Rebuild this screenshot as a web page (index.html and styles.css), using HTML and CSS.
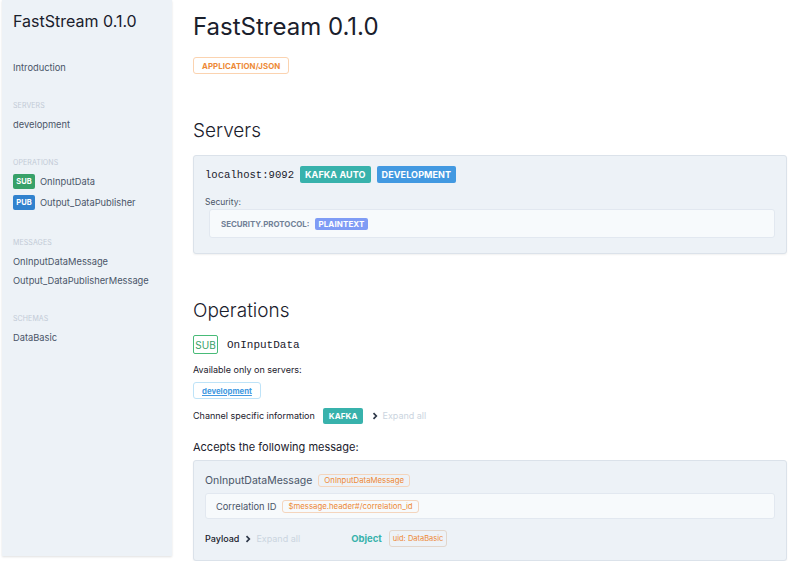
FILE: index.html
```html
<!DOCTYPE html>
<html>
<head>
<meta charset="utf-8">
<link rel="stylesheet" href="styles.css">
</head>
<body>
<div class="layout">
  <aside class="sidebar">
    <div class="side-title">FastStream 0.1.0</div>
    <div class="side-item intro">Introduction</div>
    <div class="side-label">SERVERS</div>
    <div class="side-item">development</div>
    <div class="side-label">OPERATIONS</div>
    <div class="side-op"><span class="op-badge sub">SUB</span><span>OnInputData</span></div>
    <div class="side-op"><span class="op-badge pub">PUB</span><span>Output_DataPublisher</span></div>
    <div class="side-label after-op">MESSAGES</div>
    <div class="side-item">OnInputDataMessage</div>
    <div class="side-item">Output_DataPublisherMessage</div>
    <div class="side-label">SCHEMAS</div>
    <div class="side-item">DataBasic</div>
  </aside>
  <main class="main">
    <h1 class="title">FastStream 0.1.0</h1>
    <div class="ct-row"><span class="ct-badge">APPLICATION/JSON</span></div>

    <h2 class="section servers-h">Servers</h2>
    <div class="box server-box">
      <div class="server-row">
        <span class="mono url">localhost:9092</span>
        <span class="badge teal">KAFKA AUTO</span>
        <span class="badge blue">DEVELOPMENT</span>
      </div>
      <div class="security">Security:</div>
      <div class="inner sec-inner">
        <span class="sec-key">SECURITY.PROTOCOL:</span>
        <span class="badge indigo small">PLAINTEXT</span>
      </div>
    </div>

    <h2 class="section ops-h">Operations</h2>
    <div class="op-head">
      <span class="sub-outline">SUB</span>
      <span class="mono op-name">OnInputData</span>
    </div>
    <div class="avail">Available only on servers:</div>
    <div class="srv-row"><span class="srv-link">development</span></div>
    <div class="chan-row">
      <span>Channel specific information</span>
      <span class="badge teal kafka">KAFKA</span>
      <svg class="chev" width="8" height="8" viewBox="0 0 8 8"><path d="M2.5 1.2 L5.3 4 L2.5 6.8" fill="none" stroke="#2d3748" stroke-width="1.7"/></svg>
      <span class="expand">Expand all</span>
    </div>
    <div class="accepts">Accepts the following message:</div>
    <div class="box msg-box">
      <div class="msg-head">
        <span class="msg-name">OnInputDataMessage</span>
        <span class="o-badge">OnInputDataMessage</span>
      </div>
      <div class="inner corr">
        <span class="corr-label">Correlation ID</span>
        <span class="o-badge">$message.header#/correlation_id</span>
      </div>
      <div class="payload">
        <span class="pl-label">Payload</span>
        <svg class="chev" width="8" height="8" viewBox="0 0 8 8"><path d="M2.5 1.2 L5.3 4 L2.5 6.8" fill="none" stroke="#2d3748" stroke-width="1.7"/></svg>
        <span class="expand">Expand all</span>
        <span class="obj">Object</span>
        <span class="o-badge uid">uid: DataBasic</span>
      </div>
    </div>
  </main>
</div>
</body>
</html>
```
FILE: styles.css
```css
* { box-sizing: border-box; }
body {
  margin: 0;
  background: #fff;
  font-family: Inter, "Noto Sans", sans-serif;
  color: #2d3748;
}
.layout {
  display: flex;
  align-items: flex-start;
  padding-left: 2px;
}
.sidebar {
  width: 170px;
  flex: none;
  height: 556px;
  background: #edf2f7;
  box-shadow: 0 1px 2px rgba(0,0,0,0.12);
  padding: 10px 0 0 11px;
  font-size: 9.3px;
  color: #4a5568;
}
.side-title {
  font-size: 16px;
  color: #1a202c;
  line-height: 22px;
  margin-bottom: 25.5px;
}
.side-item {
  line-height: 19px;
}
.side-label {
  font-size: 7px;
  color: #c2cad6;
  letter-spacing: 0.1px;
  margin-top: 19px;
  line-height: 19px;
}
.side-label.after-op { margin-top: 21px; }
.side-op {
  display: flex;
  align-items: center;
  gap: 5px;
  height: 19px;
  margin-bottom: 2px;
}
.op-badge {
  color: #fff;
  font-weight: 700;
  font-size: 7.5px;
  border-radius: 2px;
  width: 22px;
  height: 15px;
  display: inline-flex;
  align-items: center;
  justify-content: center;
}
.op-badge.sub { background: #38a169; }
.op-badge.pub { background: #3182ce; }

.main {
  flex: 1;
  padding: 0 13px 0 21px;
  min-width: 0;
}
.title {
  font-size: 24px;
  font-weight: 400;
  color: #1a202c;
  margin: 13px 0 0;
  line-height: 28px;
}
.ct-row { margin-top: 16px; display: flex; }
.ct-badge {
  border: 1px solid #fbd3b0;
  border-radius: 3px;
  color: #ed8936;
  font-weight: 700;
  font-size: 7.8px;
  height: 17px;
  padding: 0 8px;
  display: inline-flex;
  align-items: center;
  letter-spacing: 0.1px;
}
.section {
  font-size: 19px;
  font-weight: 300;
  color: #1a202c;
  margin: 0;
  line-height: 24px;
}
.servers-h { margin-top: 45px; }
.box {
  background: #edf2f7;
  border: 1px solid #dbe2ea;
  border-radius: 3px;
  box-shadow: 0 1px 2px rgba(0,0,0,0.06);
}
.server-box {
  margin-top: 12px;
  height: 99px;
  padding: 10px 11px 0 11px;
}
.server-row {
  display: flex;
  align-items: center;
  gap: 6px;
  height: 17px;
}
.mono { font-family: "Liberation Mono", "DejaVu Sans Mono", monospace; color: #1a202c; }
.url { font-size: 10.6px; }
.badge {
  color: #fff;
  font-weight: 700;
  font-size: 9px;
  border-radius: 2px;
  height: 17px;
  padding: 0 5px;
  display: inline-flex;
  align-items: center;
  letter-spacing: 0.1px;
}
.teal { background: #38b2ac; }
.blue { background: #4299e1; }
.indigo { background: #7f9cf5; }
.badge.small { font-size: 8px; height: 12px; padding: 0 3px; }
.security {
  font-size: 8.5px;
  color: #4a5568;
  margin-top: 13px;
  line-height: 12px;
}
.inner {
  background: #f7fafc;
  border: 1px solid #e2e8f0;
  border-radius: 3px;
}
.sec-inner {
  margin: 1px 0 0 4px;
  height: 29px;
  display: flex;
  align-items: center;
  padding-left: 11px;
  gap: 6px;
}
.sec-key {
  font-size: 7.9px;
  font-weight: 700;
  color: #718096;
}
.ops-h { margin-top: 45px; }
.op-head {
  margin-top: 12px;
  display: flex;
  align-items: center;
  gap: 9px;
}
.sub-outline {
  border: 1px solid #48bb78;
  color: #38a169;
  font-size: 10px;
  height: 19px;
  width: 25px;
  border-radius: 2px;
  display: inline-flex;
  align-items: center;
  justify-content: center;
}
.op-name { font-size: 11px; }
.avail {
  font-size: 9px;
  color: #1a202c;
  margin-top: 10px;
  line-height: 12px;
}
.srv-row { margin-top: 6px; display: flex; }
.srv-link {
  border: 1px solid #bee3f8;
  border-radius: 3px;
  color: #4299e1;
  font-weight: 700;
  font-size: 7.8px;
  text-decoration: underline;
  height: 17px;
  padding: 0 8px;
  display: inline-flex;
  align-items: center;
}
.chan-row {
  display: flex;
  align-items: center;
  font-size: 9px;
  color: #1a202c;
  margin-top: 8px;
  height: 17px;
}
.kafka { margin-left: 8px; font-size: 8px; height: 16px; padding: 0 6px; }
.chan-row .chev { margin-left: 8px; }
.expand { color: #cbd5e0; margin-left: 3px; font-size: 9px; }
.payload .expand { margin-left: 4px; }
.accepts {
  font-size: 11px;
  color: #1a202c;
  margin-top: 16px;
  line-height: 14px;
}
.msg-box {
  margin-top: 6px;
  height: 101px;
  padding: 12px 11px 0 11px;
}
.msg-head { display: flex; align-items: center; gap: 6px; height: 14px; }
.msg-name { font-size: 10.5px; color: #4a5568; }
.o-badge {
  border: 1px solid #f4d5bd;
  border-radius: 3px;
  color: #ed8936;
  font-size: 7.8px;
  height: 13px;
  padding: 0 5px;
  display: inline-flex;
  align-items: center;
}
.corr {
  margin-top: 6px;
  height: 26px;
  display: flex;
  align-items: center;
  padding-left: 10px;
  gap: 6px;
}
.corr-label { font-size: 9.3px; color: #4a5568; }
.payload {
  display: flex;
  align-items: center;
  margin-top: 11px;
  height: 17px;
  font-size: 9px;
}
.pl-label { color: #1a202c; font-weight: 500; }
.payload .chev { margin-left: 5px; }
.obj { color: #38b2ac; font-weight: 700; margin-left: 51px; font-size: 9.5px; }
.uid { height: 17px; margin-left: 7px; font-size: 7.5px; padding: 0 3px; border-color: #e2d6cc; }
```
